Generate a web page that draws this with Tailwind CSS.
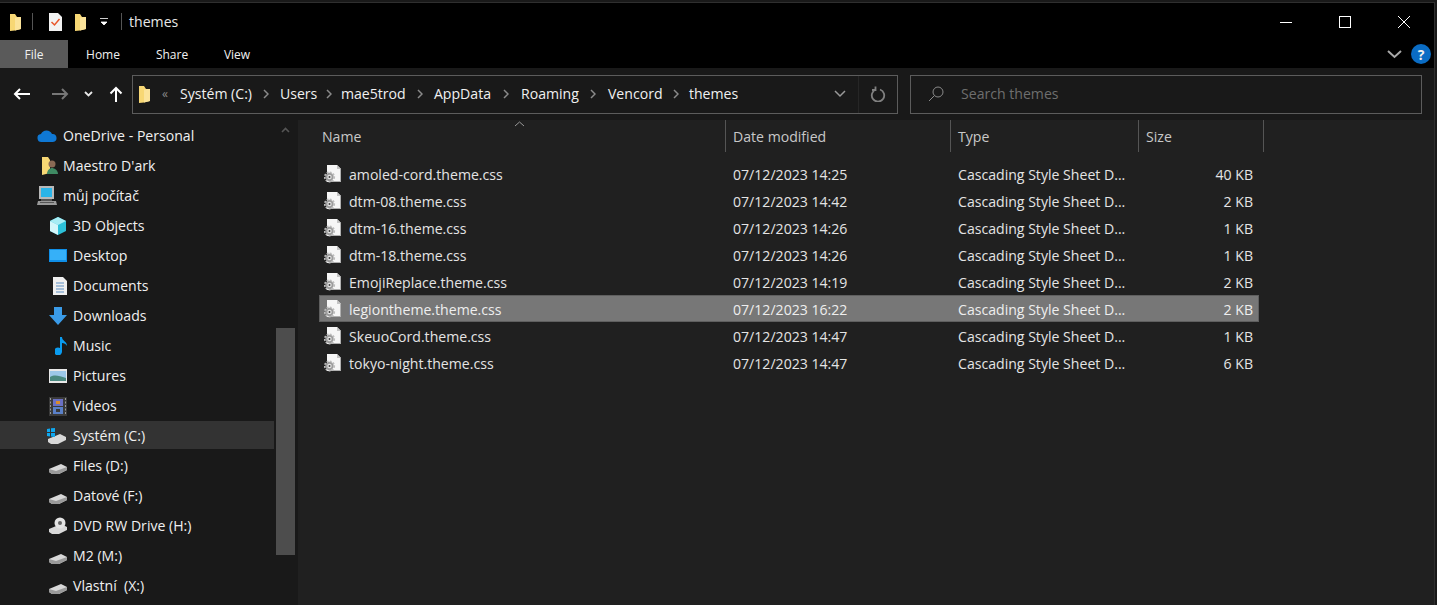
<!DOCTYPE html>
<html lang="en">
<head>
  <meta charset="UTF-8">
  <title>themes</title>
  <script src="https://cdn.jsdelivr.net/npm/@tailwindcss/browser@4"></script>
</head>
<body class="relative w-[1437px] h-[605px] overflow-hidden bg-[#191919] text-[14.1px] text-[#f0f0f0] font-['Open_Sans',sans-serif]">

  <svg class="hidden">
    <defs>
      <symbol id="folder" viewBox="0 0 13 18">
        <path d="M1 1h5l2 3h4v12l-6 1.500-5 .5z" fill="#f7d774"/>
        <path d="M6 4.500l6-.5v12l-6 1.500z" fill="#fbe39a"/>
      </symbol>
      <symbol id="drive" viewBox="0 0 20 12">
        <path d="M1 6l12-5 6 3v3l-8 4H4l-3-2z" fill="#d8d8d8"/>
        <path d="M1 6l7 2 11-4v3l-8 4H4l-3-2z" fill="#9a9a9a"/>
      </symbol>
      <symbol id="cssfile" viewBox="0 0 18 18">
        <path d="M3 0h10l4 4v13H3z" fill="#f6f6f6"/>
        <path d="M13 0l4 4h-4z" fill="#c4c4c4"/>
        <path d="M17 4v13H6v-1h10V4z" fill="#b0b0b0"/>
        <circle cx="5.500" cy="12" r="4.200" fill="#9c9c9c"/>
        <circle cx="5.500" cy="12" r="4.800" fill="none" stroke="#bcbcbc" stroke-width="1.600" stroke-dasharray="1.800 1.400"/>
        <circle cx="5.500" cy="12" r="2.200" fill="#e4e4e4"/>
        <circle cx="5.500" cy="12" r="1" fill="#444"/>
      </symbol>
      <symbol id="crumb" viewBox="0 0 6 10">
        <path d="M1 1l4 4-4 4" fill="none" stroke="#8a8a8a" stroke-width="1.500"/>
      </symbol>
    </defs>
  </svg>

  <!-- window frame line -->
  <div class="absolute left-0 right-[2px] top-[2px] bottom-0 border-t border-r border-[#2f2f2f] pointer-events-none"></div>

  <!-- title bar + ribbon -->
  <header class="h-[68px] mr-[2px] bg-black border-t-[3px] border-[#191919] flex flex-col">
    <div class="h-[37px] flex items-center pl-[9px]">
      <svg class="w-[13px] h-[18px]"><use href="#folder"/></svg>
      <span class="ml-[10px] w-px h-[17px] bg-[#555]"></span>
      <svg class="ml-[15px] w-[15px] h-[18px]" viewBox="0 0 15 18"><path d="M1 0h9l4 4v14H1z" fill="#f2f2f2"/><path d="M3.500 9l3 3 5-6" fill="none" stroke="#e8562a" stroke-width="1.500"/></svg>
      <svg class="ml-[11px] w-[13px] h-[18px]"><use href="#folder"/></svg>
      <svg class="ml-[13px] w-[8px] h-[8px]" viewBox="0 0 8 8"><path d="M0 .5h8M1 4h6L4 7z" fill="#fff" stroke="#fff" stroke-width=".8"/></svg>
      <span class="ml-[13px] w-px h-[17px] bg-[#555]"></span>
      <span class="ml-[7px] text-[#e8e8e8] pt-[1px]">themes</span>
      <div class="ml-auto flex items-center text-white mr-[8px]">
        <svg class="w-[46px] h-[12px]" viewBox="0 0 46 12"><path d="M17 6.500h12" stroke="#fff"/></svg>
        <svg class="ml-[13px] w-[46px] h-[12px]" viewBox="0 0 46 12"><rect x="17.500" y=".500" width="11" height="11" fill="none" stroke="#fff"/></svg>
        <svg class="ml-[13px] w-[46px] h-[12px]" viewBox="0 0 46 12"><path d="M17 0l12 12M29 0L17 12" stroke="#fff"/></svg>
      </div>
    </div>
    <div class="flex-1 flex items-stretch text-[12px]">
      <div class="w-[68px] bg-[#5a5a5a] flex items-center justify-center pt-[1px]">File</div>
      <div class="w-[70px] flex items-center justify-center pt-[1px]">Home</div>
      <div class="w-[68px] flex items-center justify-center pt-[1px]">Share</div>
      <div class="w-[62px] flex items-center justify-center pt-[1px]">View</div>
      <div class="ml-auto flex items-center mr-[4px] gap-[9px]">
        <svg class="w-[15px] h-[9px]" viewBox="0 0 15 9"><path d="M1 1l6.500 6L14 1" fill="none" stroke="#a8a8a8" stroke-width="2"/></svg>
        <span class="w-[20px] h-[20px] rounded-full bg-[#0a6cc4] flex items-center justify-center text-[14px] font-bold">?</span>
      </div>
    </div>
  </header>

  <!-- address bar -->
  <nav class="h-[52px] flex items-center pl-[13px] pr-[15px]">
    <svg class="w-[18px] h-[14px]" viewBox="0 0 18 14"><path d="M17 7H2M7 2L2 7l5 5" fill="none" stroke="#fff" stroke-width="2"/></svg>
    <svg class="ml-[20px] w-[18px] h-[14px]" viewBox="0 0 18 14"><path d="M1 7h15M11 2l5 5-5 5" fill="none" stroke="#777" stroke-width="2"/></svg>
    <svg class="ml-[15px] w-[9px] h-[6px]" viewBox="0 0 9 6"><path d="M1 1l3.500 3.500L8 1" fill="none" stroke="#e8e8e8" stroke-width="1.800"/></svg>
    <svg class="ml-[16px] w-[14px] h-[16px]" viewBox="0 0 14 16"><path d="M7 16V2M1.500 7.500L7 2l5.500 5.500" fill="none" stroke="#fff" stroke-width="2"/></svg>
    <div class="ml-[9px] w-[766px] h-[39px] border border-[#5c5c5c] flex items-center">
      <svg class="ml-[5px] w-[13px] h-[18px]"><use href="#folder"/></svg>
      <span class="ml-[11px] text-[#8a8a8a] text-[12px]">«</span>
      <div id="crumbs" class="ml-[12px] flex items-center"></div>
      <svg class="ml-auto mr-[12px] w-[12px] h-[8px]" viewBox="0 0 12 8"><path d="M1 1l5 5 5-5" fill="none" stroke="#999" stroke-width="1.500"/></svg>
      <div class="w-[39px] h-full border-l border-[#262626] flex items-center justify-center">
        <svg class="w-[16px] h-[16px]" viewBox="0 0 16 16"><path d="M10 3a6.200 6.200 0 1 1-4 0M5.500 0v3.500H2" transform="translate(0 .5)" fill="none" stroke="#808080" stroke-width="1.800"/></svg>
      </div>
    </div>
    <div class="ml-[12px] flex-1 h-[39px] border border-[#5c5c5c] flex items-center pl-[17px] text-[#6e6e6e]">
      <svg class="w-[16px] h-[16px]" viewBox="0 0 16 16"><circle cx="10" cy="6" r="5" fill="none" stroke="#8a8a8a"/><path d="M6.500 9.500L1 15" stroke="#8a8a8a"/></svg>
      <span class="ml-[17px]">Search themes</span>
    </div>
  </nav>

  <main class="h-[485px] mr-[2px] flex">
    <!-- nav pane -->
    <aside class="relative w-[298px] bg-[#191919] pt-[1px]">
      <ul id="tree"></ul>
      <div class="absolute left-[276px] top-0 bottom-0 w-[20px]">
        <svg class="absolute left-[5px] top-[7px] w-[9px] h-[6px]" viewBox="0 0 9 6"><path d="M1 5l3.500-3.500L8 5" fill="none" stroke="#555" stroke-width="1.600"/></svg>
        <div class="absolute top-[208px] h-[227px] w-[19px] bg-[#4d4d4d]"></div>
      </div>
    </aside>

    <!-- file list -->
    <section class="flex-1 bg-[#202020]">
      <div class="h-[32px] relative flex pl-[24px] text-[#c8c8c8]">
        <svg class="absolute left-[216px] top-[1px] w-[11px] h-[6px]" viewBox="0 0 11 6"><path d="M1 5l4.500-4L10 5" fill="none" stroke="#999"/></svg>
        <div class="w-[404px] h-[32px] pt-[6px] border-r border-[#555]">Name</div>
        <div class="w-[225px] h-[32px] pt-[6px] pl-[7px] border-r border-[#555]">Date modified</div>
        <div class="w-[188px] h-[32px] pt-[6px] pl-[7px] border-r border-[#555]">Type</div>
        <div class="w-[125px] h-[32px] pt-[6px] pl-[7px] border-r border-[#555]">Size</div>
      </div>
      <div id="rows" class="mt-[8px] ml-[21px] w-[940px]"></div>
    </section>
  </main>

  <script>
    const crumbs = [
      ['Systém (C:)', 'w-[100px]'],
      ['Users', 'w-[61px]'],
      ['mae5trod', 'w-[93px]'],
      ['AppData', 'w-[87px]'],
      ['Roaming', 'w-[87px]'],
      ['Vencord', 'w-[81px]'],
    ];

    document.getElementById('crumbs').innerHTML = crumbs.map(([label, width]) =>
      `<div class="${width} flex items-center"><span>${label}</span>
        <span class="flex-1 flex justify-center"><svg class="w-[6px] h-[10px]"><use href="#crumb"/></svg></span></div>`
    ).join('') + '<span>themes</span>';

    const drive = '<svg class="w-[20px] h-[12px] mt-[6px]"><use href="#drive"/></svg>';
    const treeItems = [
      ['OneDrive - Personal', 38, '<svg class="w-[20px] h-[13px]" viewBox="0 0 20 13"><path d="M5 12a4 4 0 0 1-1-8 6 6 0 0 1 11 0 4 4 0 0 1 1 8z" fill="#0f78d4"/></svg>'],
      ["Maestro D'ark", 41, '<svg class="w-[17px] h-[18px]" viewBox="0 0 17 18"><path d="M0 0h6l2 3v13l-8 2z" fill="#f7d774"/><circle cx="10" cy="7" r="3.500" fill="#8a6a55"/><path d="M5 17c0-4 3-6 5-6s6 2 6 6z" fill="#3f8a63"/></svg>'],
      ['můj počítač', 38, '<svg class="w-[20px] h-[20px]" viewBox="0 0 20 20"><rect x="2" y="0" width="15" height="13" fill="#b8b8b8"/><rect x="4" y="2" width="11" height="9" fill="#2bb4e8"/><path d="M4 13h11v2H4z" fill="#555"/><path d="M1 15h18l1 4H0z" fill="#9a9a9a"/><path d="M3 16.500h14" stroke="#555"/></svg>'],
      ['3D Objects', 49, '<svg class="w-[18px] h-[18px]" viewBox="0 0 18 18"><path d="M9 0l8 4v10l-8 4-8-4V4z" fill="#2cc0d8"/><path d="M1 4l8 4 8-4-8-4z" fill="#a8ecf4"/><path d="M1 4l8 4v10l-8-4z" fill="#d4f6fa"/></svg>'],
      ['Desktop', 49, '<svg class="w-[18px] h-[14px]" viewBox="0 0 18 14"><rect width="18" height="13" fill="#0f8fe8"/><rect x="1" y="1" width="16" height="10" fill="#36b0f8"/></svg>'],
      ['Documents', 51, '<svg class="w-[14px] h-[18px]" viewBox="0 0 14 18"><path d="M0 0h10l4 4v14H0z" fill="#f0f0f0"/><path d="M3 6h8M3 9h8M3 12h8M3 15h8" stroke="#5c8fc4"/></svg>'],
      ['Downloads', 49, '<svg class="w-[18px] h-[18px]" viewBox="0 0 18 18"><path d="M5 0h8v8h5l-9 10L0 8h5z" fill="#3a9be8"/></svg>'],
      ['Music', 52, '<svg class="w-[12px] h-[18px]" viewBox="0 0 12 18"><path d="M5 0h2c0 4 5 4 5 9-1-2-3-3-5-3v8a4 4 0 1 1-2-3z" fill="#0a9cf0"/></svg>'],
      ['Pictures', 49, '<svg class="w-[18px] h-[14px]" viewBox="0 0 18 14"><rect width="18" height="14" fill="#e8e8e8"/><rect x="1" y="2" width="16" height="10" fill="#9cc8e8"/><path d="M1 8c5-3 9-1 16 1v3H1z" fill="#4a8a80"/></svg>'],
      ['Videos', 49, '<svg class="w-[18px] h-[19px]" viewBox="0 0 18 19"><rect width="18" height="19" fill="#3a3a3a"/><path d="M1.500 1v17M16.500 1v17" stroke="#999" stroke-dasharray="2 1.500"/><rect x="4" y="2" width="10" height="7" fill="#6a70c4"/><rect x="4" y="10" width="10" height="7" fill="#5a80c8"/><rect x="7" y="4" width="4" height="3" fill="#d88c2c"/><rect x="7" y="12" width="4" height="3" fill="#3a3a3a"/></svg>'],
      ['Systém (C:)', 48, '<svg class="w-[20px] h-[17px]" viewBox="0 0 20 17"><path d="M1 11l12-5 6 3v3l-8 4H4l-3-2z" fill="#d8d8d8"/><path d="M0 1l3-.5V4H0zM4 .3L8 0v4H4zM0 5h3v3.500L0 8zM4 5h4v4L4 8.500z" fill="#0fa8f0"/></svg>'],
      ['Files (D:)', 49, drive],
      ['Datové (F:)', 49, drive],
      ['DVD RW Drive (H:)', 49, '<svg class="w-[20px] h-[18px]" viewBox="0 0 20 18"><path d="M1 12l12-5 6 3v3l-8 4H4l-3-2z" fill="#d8d8d8"/><circle cx="12" cy="6" r="5.500" fill="#e4e4e4"/><circle cx="12" cy="6" r="2" fill="#666"/></svg>'],
      ['M2 (M:)', 49, drive],
      ['Vlastní  (X:)', 49, drive],
    ];

    document.getElementById('tree').innerHTML = treeItems.map(([label, left, icon]) => {
      const selected = label === 'Systém (C:)';
      return `<li class="relative flex items-center ${selected ? 'h-[28px] mb-[2px] pt-[2px] bg-[#333333] w-[274px]' : 'h-[30px]'}">
        <span class="absolute flex justify-center w-[20px]" style="left:${left - 1}px">${icon}</span>
        <span class="whitespace-pre ${left < 45 ? 'ml-[63px]' : 'ml-[73px]'}">${label}</span>
      </li>`;
    }).join('');

    const files = [
      ['amoled-cord.theme.css', '07/12/2023 14:25', '40 KB'],
      ['dtm-08.theme.css', '07/12/2023 14:42', '2 KB'],
      ['dtm-16.theme.css', '07/12/2023 14:26', '1 KB'],
      ['dtm-18.theme.css', '07/12/2023 14:26', '1 KB'],
      ['EmojiReplace.theme.css', '07/12/2023 14:19', '2 KB'],
      ['legiontheme.theme.css', '07/12/2023 16:22', '2 KB'],
      ['SkeuoCord.theme.css', '07/12/2023 14:47', '1 KB'],
      ['tokyo-night.theme.css', '07/12/2023 14:47', '6 KB'],
    ];

    document.getElementById('rows').innerHTML = files.map(([name, date, size]) => {
      const selected = name.startsWith('legiontheme');
      return `<div class="h-[27px] pt-[2px] flex items-center border ${selected ? 'bg-[#777777] border-[#5f5f5f] text-[#eeeeee]' : 'border-transparent text-[#e4e4e4]'}">
        <svg class="ml-[4px] -mt-[2px] w-[18px] h-[18px] shrink-0"><use href="#cssfile"/></svg>
        <span class="ml-[7px] w-[384px] shrink-0">${name}</span>
        <span class="w-[225px] shrink-0">${date}</span>
        <span class="w-[188px] shrink-0">Cascading Style Sheet D...</span>
        <span class="w-[107px] text-right shrink-0">${size}</span>
      </div>`;
    }).join('');
  </script>
</body>
</html>
